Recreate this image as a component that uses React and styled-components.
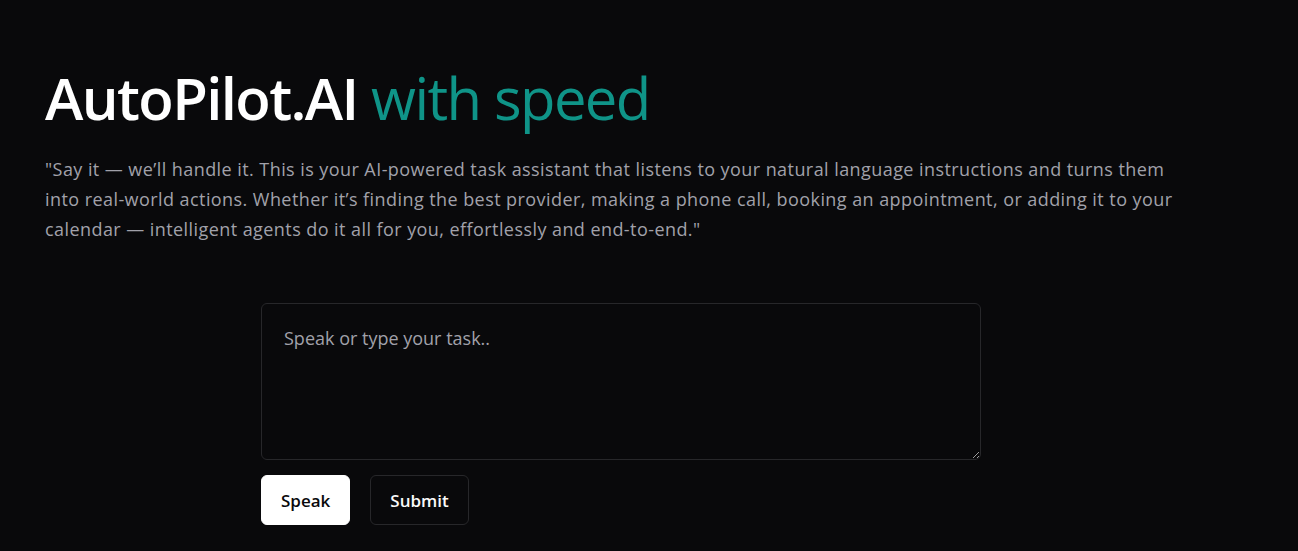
import React from 'react'
import styled, { createGlobalStyle } from 'styled-components'

const GlobalStyle = createGlobalStyle`
  html, body {
    margin: 0;
    padding: 0;
    background: #09090b;
    font-family: 'Open Sans', 'Noto Sans', sans-serif;
  }
`

const Page = styled.main`
  min-height: 551px;
  background: #09090b;
  color: #fafafa;
  padding: 57px 45px 0;
  box-sizing: border-box;
`

const Container = styled.div`
  max-width: 1152px;
`

const Title = styled.h1`
  margin: 0;
  font-size: 58px;
  line-height: 82px;
  font-weight: 600;
  letter-spacing: -1.6px;
  color: #ffffff;
`

const Accent = styled.span`
  color: #0f9488;
  font-weight: 500;
`

const Description = styled.p`
  margin: 15px 0 0;
  max-width: 1148px;
  font-size: 18px;
  line-height: 30px;
  color: #a1a1aa;
  letter-spacing: 0.43px;
`

const Form = styled.div`
  width: 720px;
  margin: 59px auto 0;
  display: flex;
  flex-direction: column;
  gap: 15px;
`

const TaskInput = styled.textarea`
  box-sizing: border-box;
  width: 720px;
  height: 157px;
  padding: 20px 22px;
  background: #09090b;
  border: 1px solid #27272a;
  border-radius: 6px;
  color: #e4e4e7;
  font-family: inherit;
  font-size: 18px;
  line-height: 28px;
  outline: none;
  resize: vertical;

  &::placeholder {
    color: #a1a1aa;
  }
`

const Actions = styled.div`
  display: flex;
  gap: 20px;
`

const Button = styled.button`
  height: 50px;
  padding: 0 19px;
  border-radius: 6px;
  font-family: inherit;
  font-size: 17px;
  font-weight: 600;
  cursor: pointer;
  border: 1px solid ${p => (p.primary ? '#ffffff' : '#27272a')};
  background: ${p => (p.primary ? '#ffffff' : '#09090b')};
  color: ${p => (p.primary ? '#09090b' : '#fafafa')};
`

export default function App() {
  return (
    <>
      <GlobalStyle />
      <Page>
        <Container>
          <Title>
            AutoPilot.AI <Accent>with speed</Accent>
          </Title>
          <Description>
            "Say it — we’ll handle it. This is your AI-powered task assistant that listens to your natural language
            instructions and turns them into real-world actions. Whether it’s finding the best provider, making a
            phone call, booking an appointment, or adding it to your calendar — intelligent agents do it all for you,
            effortlessly and end-to-end."
          </Description>
          <Form>
            <TaskInput placeholder="Speak or type your task.." />
            <Actions>
              <Button primary>Speak</Button>
              <Button>Submit</Button>
            </Actions>
          </Form>
        </Container>
      </Page>
    </>
  )
}
